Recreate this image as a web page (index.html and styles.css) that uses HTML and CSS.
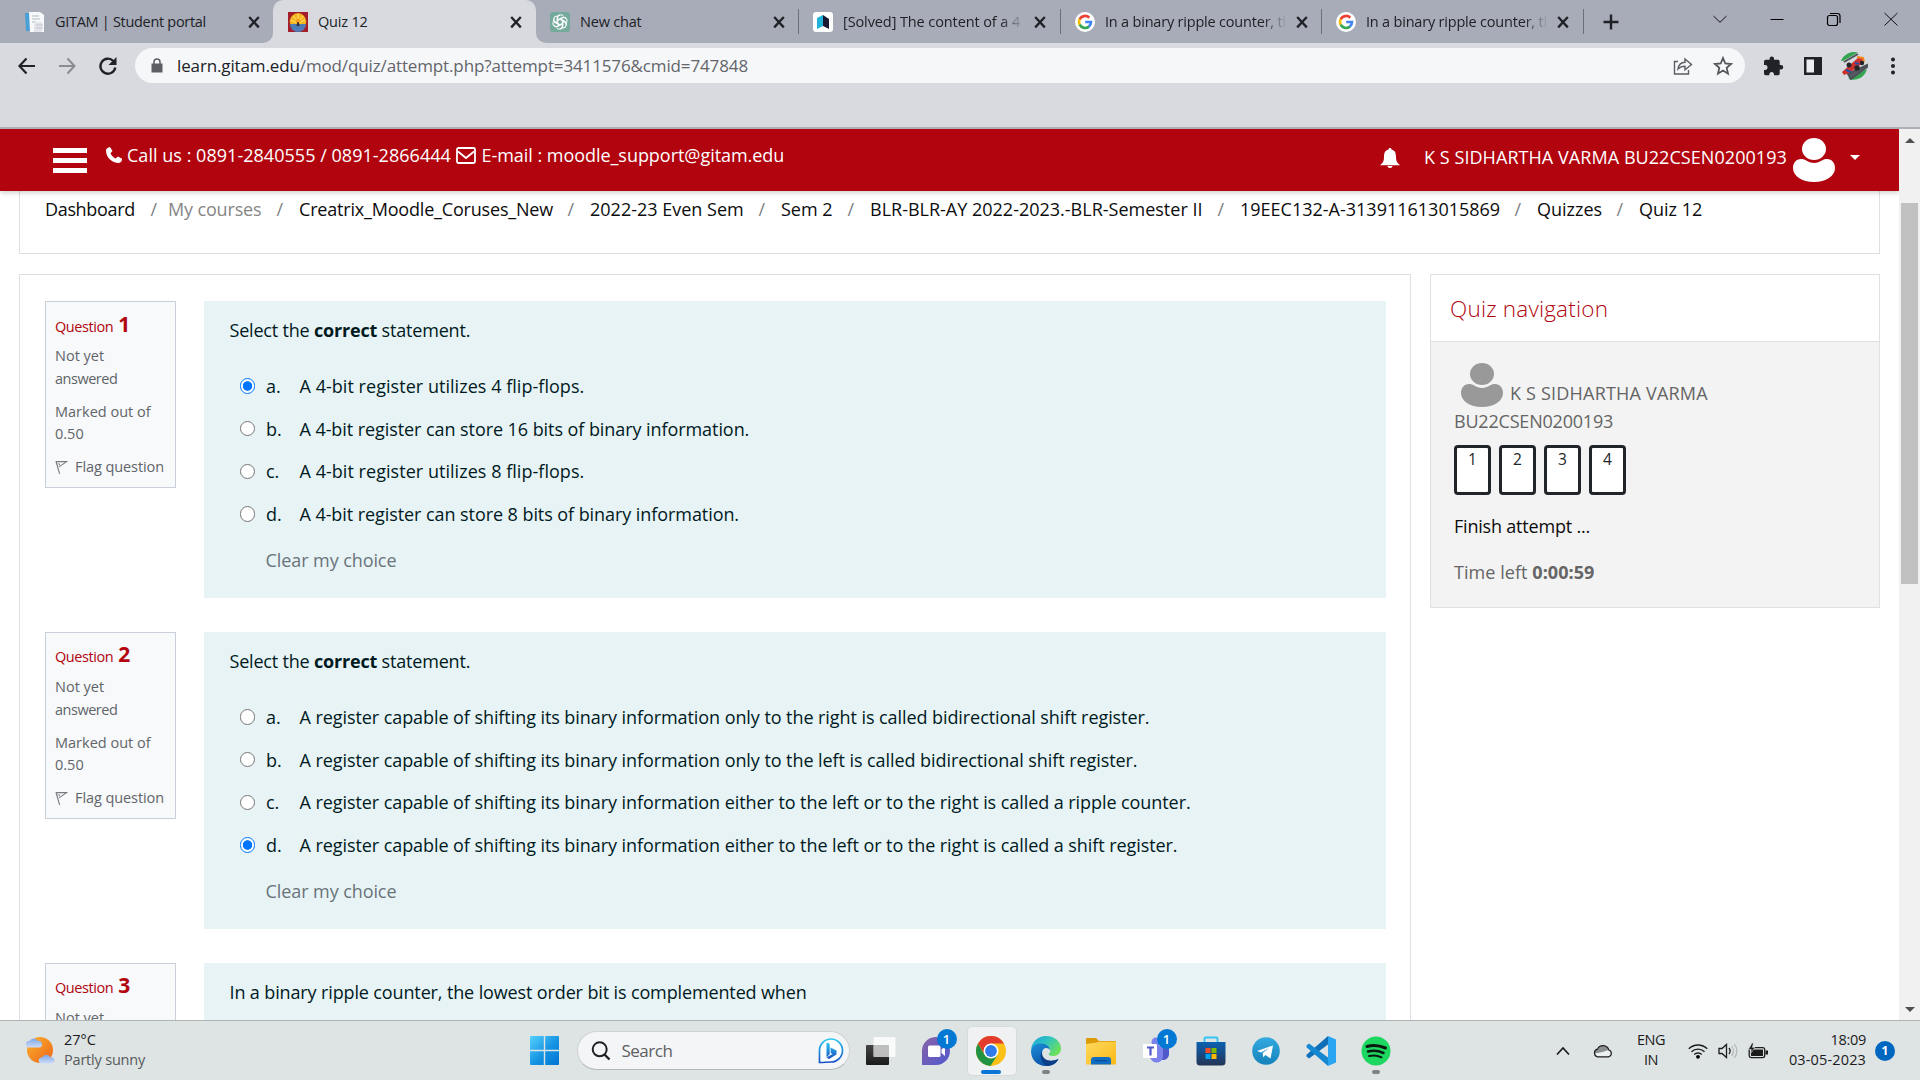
FILE: index.html
```
<!DOCTYPE html>
<html lang="en">
<head>
<meta charset="utf-8">
<title>Quiz 12</title>
<link rel="stylesheet" href="styles.css">
</head>
<body>
<svg class="defs" width="0" height="0">
  <symbol id="close" viewBox="0 0 20 20"><path d="M5.2 5l9.6 10.4M14.8 5L5.2 15.400" stroke="#202227" stroke-width="2.300" fill="none"/></symbol>
  <symbol id="google" viewBox="0 0 20 20">
    <circle cx="10" cy="10" r="10" fill="#fff"/>
    <g fill="none" stroke-width="2.700">
      <path d="M14.300 5.700A6 6 0 0 0 4.700 7.300" stroke="#ea4335"/>
      <path d="M4.700 7.200A6 6 0 0 0 4.700 12.800" stroke="#fbbc05"/>
      <path d="M4.700 12.700A6 6 0 0 0 13.900 14.600" stroke="#34a853"/>
      <path d="M13.700 14.700A6 6 0 0 0 16 10H10.200" stroke="#4285f4"/>
    </g>
  </symbol>
  <symbol id="person" viewBox="0 0 42 44"><ellipse cx="21" cy="11" rx="12" ry="11"/><path d="M8 21c2 0 4 .5 6 2q7 4 14 0c2-1.500 4-2 6-2 5 0 8 4 8 9 0 8-9 14-21 14S0 38 0 30c0-5 3-9 8-9z"/></symbol>
  <symbol id="flag" viewBox="0 0 14 15"><path d="M1 .8l4 13.500M1.200 1.200h11.300L4.300 6.800M1.200 1.500l1.300 3M4 2.800l1 2" stroke="#777c81" stroke-width="1.200" fill="none"/></symbol>
</svg>

<div class="tabs">
  <div class="tab first">
    <svg class="fav" viewBox="0 0 20 20"><path d="M0 1h5v18H1z" fill="#4a9fd4"/><path d="M4 0h11l4 3v17H5z" fill="#f7f8fa"/><path d="M7 4h7M7 7h8M7 10h4" stroke="#c9cdd6" stroke-width="1.500"/><path d="M9 10h8v10H9z" fill="#e3e5eb"/><path d="M11 13h7M11 16h7" stroke="#c0c5cf"/></svg>
    <span class="title t-gitam">GITAM | Student portal</span>
    <svg class="x"><use href="#close"/></svg>
  </div>
  <div class="tab-slot"><div class="tab active">
    <svg class="fav" viewBox="0 0 20 20"><path d="M0 0h20v20H0z" fill="#a31d2b"/><circle cx="10" cy="9.500" r="8.300" fill="#f6b51e"/><path d="M2 12h16a8 8 0 0 1-16 0z" fill="#4c7bb5"/><path d="M10 1v10M5 4l5 6 5-6M3 8l6 3h2l6-3" stroke="#fae36a" fill="none"/><circle cx="10" cy="9" r="2.200" fill="#fa9b1b"/><path d="M9.300 10h1.400l.8 4h-3z" fill="#3b2b2a"/></svg>
    <span class="title">Quiz 12</span>
    <svg class="x"><use href="#close"/></svg>
  </div></div>
  <div class="tab after">
    <svg class="fav" viewBox="0 0 20 20"><rect width="20" height="20" rx="3" fill="#74aa9c"/><g fill="none" stroke="#fff" stroke-width="1"><path id="petal" d="M7.700 11.300V6a3.200 3.200 0 0 1 5.900-1.700M7.700 7.900l4-2.300a3.200 3.200 0 0 1 4.300 1"/><use href="#petal" transform="rotate(60 10 10)"/><use href="#petal" transform="rotate(120 10 10)"/><use href="#petal" transform="rotate(180 10 10)"/><use href="#petal" transform="rotate(240 10 10)"/><use href="#petal" transform="rotate(300 10 10)"/></g></svg>
    <span class="title">New chat</span>
    <svg class="x"><use href="#close"/></svg>
  </div>
  <div class="tab plain">
    <svg class="fav" viewBox="0 0 20 20"><rect width="20" height="20" rx="3" fill="#fff"/><path d="M4 6l6-3v11l-6 3z" fill="#20b4d8"/><path d="M10 3l6 4v10l-6-3z" fill="#191a32"/></svg>
    <span class="title fade solved">[Solved] The content of a 4</span>
    <svg class="x"><use href="#close"/></svg>
  </div>
  <div class="tab plain narrow">
    <svg class="fav"><use href="#google"/></svg>
    <span class="title fade">In a binary ripple counter, the</span>
    <svg class="x"><use href="#close"/></svg>
  </div>
  <div class="tab plain">
    <svg class="fav"><use href="#google"/></svg>
    <span class="title fade">In a binary ripple counter, the</span>
    <svg class="x"><use href="#close"/></svg>
  </div>
  <div class="tab-end">
    <svg class="plus" viewBox="0 0 20 20"><path d="M10 2.500v15M2.500 10h15" stroke="#202227" stroke-width="2.400"/></svg>
    <div class="win">
      <svg viewBox="0 0 16 16"><path d="M1.500 5L8 11.300 14.500 5" fill="none" stroke="#111"/></svg>
      <svg viewBox="0 0 16 16"><path d="M1.500 8.500h13" stroke="#000"/></svg>
      <svg viewBox="0 0 16 16"><rect x="1.500" y="4.500" width="10" height="10" rx="2" fill="none" stroke="#000" stroke-width="1.200"/><path d="M4 2.500h7.500a2.500 2.500 0 0 1 2.500 2.500V12" fill="none" stroke="#000" stroke-width="1.200"/></svg>
      <svg viewBox="0 0 16 16"><path d="M1.500 2l13 12.500M14.500 2l-13 12.500" stroke="#111"/></svg>
    </div>
  </div>
</div>

<div class="toolbar">
  <svg class="tool back" viewBox="0 0 24 24"><path d="M20 12H5M11.500 4.500L4.500 12l7 7.500" fill="none" stroke="#202227" stroke-width="2.200"/></svg>
  <svg class="tool fwd" viewBox="0 0 24 24"><path d="M4 12h15M12.500 4.500l7 7.500-7 7.500" fill="none" stroke="#8b8c92" stroke-width="2"/></svg>
  <svg class="tool reload" viewBox="0 0 24 24"><path d="M19.300 13.500A7.500 7.500 0 1 1 17.300 7" fill="none" stroke="#202227" stroke-width="2.300"/><path d="M20.500 3v8h-8z" fill="#202227"/></svg>
  <div class="omnibox">
    <svg class="lock" viewBox="0 0 12 14"><path d="M.5 5h11v9H.5z" fill="#5c5e64"/><path d="M3 5.500V3.500a3 3 0 0 1 6 0v2" fill="none" stroke="#5c5e64" stroke-width="1.500"/></svg>
    <span class="url"><b>learn.gitam.edu</b>/mod/quiz/attempt.php?attempt=3411576&amp;cmid=747848</span>
    <svg class="share" viewBox="0 0 20 20"><path d="M5 5.500H1.500v12.500h14V14M5 13c.5-4 3-6.500 7-6.700V3l6.500 5.500L12 13.800v-3.500C9 10.300 7 11 5 13z" fill="none" stroke="#5c5e64" stroke-width="1.400"/></svg>
    <svg class="star" viewBox="0 0 20 20"><path d="M10 2l2.300 5.500 5.700.5-4.300 3.900 1.300 5.800-5-3.100-5 3.100 1.300-5.800L2 8l5.700-.5z" fill="none" stroke="#55575c" stroke-width="1.800"/></svg>
  </div>
  <svg class="tool puzzle" viewBox="0 0 24 24"><path d="M20 11h-1.300V7.500A1.700 1.700 0 0 0 17 5.800h-4V4.600a2.200 2.200 0 0 0-4.400 0v1.200H4.800A1.800 1.800 0 0 0 3 7.600v3.500h1.200a2.400 2.400 0 0 1 0 4.800H3v3.600a1.700 1.700 0 0 0 1.800 1.700h3.500V20a2.400 2.400 0 0 1 4.700 0v1.200h4a1.700 1.700 0 0 0 1.700-1.700v-4H20a2.200 2.200 0 0 0 0-4.500z" fill="#202227"/></svg>
  <svg class="tool panel" viewBox="0 0 24 24"><path d="M3 3h18v18H3z" fill="#202227"/><path d="M5.500 5.500h7.500v13H5.500z" fill="#eceef2"/></svg>
  <svg class="avatar" viewBox="0 0 28 28"><circle cx="14" cy="14" r="14" fill="#d8dade"/><path d="M1 9A14 14 0 0 1 18 .6L3 9zM27 17A14 14 0 0 1 8 26.700z" fill="#35a552"/><path d="M4 10L18 2M11 27l16-12v-2L8 22z" stroke="#4d5259" stroke-width="2" fill="#555a61"/><path d="M2 20l9-8 8-7 5 2-1 4-8 6-6 4-5 2z" fill="#cd302d"/><path d="M17 5l6 1 1 4" stroke="#f58a25" stroke-width="2" fill="none"/><path d="M6 18l5 2m4-9l4 1" stroke="#2153ad" stroke-width="2"/><circle cx="9" cy="13" r="2.500" fill="#23262b"/><circle cx="17" cy="16" r="2.700" fill="#23262b"/><circle cx="22" cy="11" r="2.200" fill="#23262b"/></svg>
  <svg class="tool dots" viewBox="0 0 24 24"><circle cx="12" cy="5.500" r="2"/><circle cx="12" cy="12" r="2"/><circle cx="12" cy="18.500" r="2"/></svg>
</div>

<div class="page">
  <div class="doc">
    <header class="site">
      <div class="burger"><i></i><i></i><i></i></div>
      <svg class="phone" viewBox="0 0 16 16"><path d="M1.500 1L4 0l2.500 4-2 2.300c1 2.400 2.700 4.100 5 5.100L12 9.500l4 2.300c.2 2-.9 3.400-3 4.200C5.500 15.800.2 10.500 0 3.500 0 2.300.6 1.500 1.500 1z" fill="#fff"/></svg>
      <span class="call">Call us : 0891-2840555 / 0891-2866444</span>
      <svg class="mail" viewBox="0 0 20 17"><rect x="1" y="1" width="18" height="15" rx="1.500" fill="none" stroke="#fff" stroke-width="1.800"/><path d="M2 4.500l8 6.500 8-6.500" fill="none" stroke="#fff" stroke-width="1.800"/></svg>
      <span class="email">E-mail : moodle_support@gitam.edu</span>
      <svg class="bell" viewBox="0 0 20 20"><path d="M10 0c1 0 1.500.6 1.500 1.500C15 2.300 16 5 16 9c0 4 1 6 4 8.300H0C3 15 4 13 4 9c0-4 1-6.700 4.500-7.500C8.500.6 9 0 10 0zM7.500 18h5c0 1.300-1 2-2.500 2s-2.500-.7-2.500-2z" fill="#fff"/></svg>
      <span class="user">K S SIDHARTHA VARMA BU22CSEN0200193</span>
      <svg class="face" fill="#fff"><use href="#person"/></svg>
      <i class="caret"></i>
    </header>

    <nav class="crumbs">
      <span><a class="tight">Dashboard</a><i>/</i></span>
      <span><a class="muted">My courses</a><i>/</i></span>
      <span><a class="snug">Creatrix_Moodle_Coruses_New</a><i>/</i></span>
      <span><a>2022-23 Even Sem</a><i>/</i></span>
      <span><a>Sem 2</a><i>/</i></span>
      <span><a>BLR-BLR-AY 2022-2023.-BLR-Semester II</a><i>/</i></span>
      <span><a>19EEC132-A-313911613015869</a><i>/</i></span>
      <span><a>Quizzes</a><i>/</i></span>
      <span><a>Quiz 12</a></span>
    </nav>

    <div class="cols">
      <main class="quiz">
        <section class="question">
          <div class="info">
            <h3>Question <b>1</b></h3>
            <p class="state">Not yet<br><span>answered</span></p>
            <p class="grade">Marked out of<br>0.50</p>
            <p class="flag"><svg><use href="#flag"/></svg>Flag question</p>
          </div>
          <div class="body short">
            <p class="stem">Select the <b>correct</b> statement.</p>
            <div class="answers">
              <label><i class="radio on"></i><em>a.</em><span>A 4-bit register utilizes 4 flip-flops.</span></label>
              <label><i class="radio"></i><em>b.</em><span>A 4-bit register can store 16 bits of binary information.</span></label>
              <label><i class="radio"></i><em>c.</em><span>A 4-bit register utilizes 8 flip-flops.</span></label>
              <label><i class="radio"></i><em>d.</em><span>A 4-bit register can store 8 bits of binary information.</span></label>
            </div>
            <p class="clear">Clear my choice</p>
          </div>
        </section>
        <section class="question">
          <div class="info">
            <h3>Question <b>2</b></h3>
            <p class="state">Not yet<br><span>answered</span></p>
            <p class="grade">Marked out of<br>0.50</p>
            <p class="flag"><svg><use href="#flag"/></svg>Flag question</p>
          </div>
          <div class="body long">
            <p class="stem">Select the <b>correct</b> statement.</p>
            <div class="answers">
              <label><i class="radio"></i><em>a.</em><span>A register capable of shifting its binary information only to the right is called bidirectional shift register.</span></label>
              <label><i class="radio"></i><em>b.</em><span>A register capable of shifting its binary information only to the left is called bidirectional shift register.</span></label>
              <label><i class="radio"></i><em>c.</em><span>A register capable of shifting its binary information either to the left or to the right is called a ripple counter.</span></label>
              <label><i class="radio on"></i><em>d.</em><span>A register capable of shifting its binary information either to the left or to the right is called a shift register.</span></label>
            </div>
            <p class="clear">Clear my choice</p>
          </div>
        </section>
        <section class="question">
          <div class="info">
            <h3>Question <b>3</b></h3>
            <p class="state">Not yet</p>
          </div>
          <div class="body">
            <p class="stem ripple">In a binary ripple counter, the lowest order bit is complemented when</p>
          </div>
        </section>
      </main>

      <aside class="nav">
        <h2>Quiz navigation</h2>
        <div class="nav-body">
          <div class="who"><svg fill="#999"><use href="#person"/></svg><span>K S SIDHARTHA VARMA</span></div>
          <p class="id">BU22CSEN0200193</p>
          <div class="nums"><a>1</a><a>2</a><a>3</a><a>4</a></div>
          <p class="finish">Finish attempt ...</p>
          <p class="left">Time left <b>0:00:59</b></p>
        </div>
      </aside>
    </div>
  </div>
  <div class="scroll"><i class="up"></i><div class="thumb"></div><i class="down"></i></div>
</div>

<footer class="taskbar">
  <div class="weather">
    <svg viewBox="0 0 30 30"><defs><linearGradient id="sun" x1="0" y1="0" x2="1" y2="1"><stop offset="0" stop-color="#f8b32c"/><stop offset="1" stop-color="#f0631a"/></linearGradient><linearGradient id="cl" x1="0" y1="0" x2="0" y2="1"><stop offset="0" stop-color="#7fa6e6"/><stop offset="1" stop-color="#cddcf9"/></linearGradient></defs><circle cx="15" cy="15" r="13" fill="url(#sun)"/><path d="M3 12.500a3.500 3.500 0 0 1 0-6.500h1.500a4.800 4.800 0 0 1 8.500 0 3.300 3.300 0 0 1 1.500 6.500z" fill="url(#cl)"/><path d="M15.500 28.500a3.300 3.300 0 0 1 0-6h1.500a4.700 4.700 0 0 1 8.500 0 3 3 0 0 1 1.500 6z" fill="url(#cl)"/></svg>
    <div><p>27°C</p><p class="sky">Partly sunny</p></div>
  </div>
  <svg class="start" viewBox="0 0 29 29"><defs><linearGradient id="win" x1="0" y1="0" x2="1" y2="1"><stop offset="0" stop-color="#55d1ff"/><stop offset=".55" stop-color="#1593e2"/><stop offset="1" stop-color="#0073d2"/></linearGradient></defs><path d="M0 1q0-1 1-1h12.800v13.800H0zM15.200 0H28q1 0 1 1v12.800H15.200zM0 15.200h13.800V29H1q-1 0-1-1zM15.200 15.200H29V28q0 1-1 1H15.200z" fill="url(#win)"/></svg>
  <div class="search">
    <svg class="lens" viewBox="0 0 20 20"><circle cx="8.700" cy="8.300" r="7" fill="none" stroke="#222" stroke-width="2"/><path d="M13.500 13.500l5 5" stroke="#222" stroke-width="2.400"/></svg>
    <span>Search</span>
    <svg class="bing" viewBox="0 0 26 26"><defs><linearGradient id="bg1" x1="0" y1="0" x2="0" y2="1"><stop offset="0" stop-color="#2bc7ee"/><stop offset="1" stop-color="#1850c8"/></linearGradient></defs><path d="M1.500 24.500v-12A11.500 11.500 0 1 1 13 24c-4 0-7 .5-11.500.5z" fill="#fff" stroke="url(#bg1)" stroke-width="1.700"/><path d="M8.500 4.500l3.200 1.200v10.500l-3.200 3zM12.500 9.500l6 3v4L11 21l-2.500-1.600 6-3.400-1.800-1z" fill="url(#bg1)"/></svg>
  </div>
  <div class="apps">
    <div class="app"><svg viewBox="0 0 30 30"><defs><linearGradient id="tv" x1="0" y1="0" x2="0" y2="1"><stop offset="0" stop-color="#444"/><stop offset="1" stop-color="#1b1b1b"/></linearGradient></defs><rect x="0" y="9" width="23" height="20" rx="1" fill="url(#tv)"/><rect x="7.500" y="1" width="22" height="20" rx="1" fill="#fff" opacity=".82"/><path d="M7.500 9H23v12H7.500z" fill="#aaa" opacity=".6"/></svg></div>
    <div class="app"><svg viewBox="0 0 30 30"><defs><linearGradient id="chat" x1="0" y1="0" x2="1" y2="1"><stop offset="0" stop-color="#8b62a5"/><stop offset="1" stop-color="#4e59cf"/></linearGradient></defs><path d="M1 29V16A14 14 0 1 1 15 29z" fill="url(#chat)"/><rect x="7" y="9.500" width="12.500" height="11.500" rx="1.500" fill="#fff"/><path d="M20.500 13.500l3.500-3v9.500l-3.500-3z" fill="#fff"/></svg><b class="badge">1</b></div>
    <div class="app on"><svg viewBox="0 0 30 30"><circle cx="15" cy="15" r="15" fill="#fbc116"/><path d="M2 7.500A15 15 0 0 0 14.500 30L21.500 18.800 15 15 8.500 18.700z" fill="#229342"/><path d="M2 7.500l6.500 10.800L15 7.500H28A15 15 0 0 0 2 7.500z" fill="#e33b2e"/><circle cx="15" cy="15" r="7.500" fill="#fff"/><circle cx="15" cy="15" r="5.900" fill="#2f7bea"/></svg><i class="run wide"></i></div>
    <div class="app"><svg viewBox="0 0 30 30"><defs><linearGradient id="e1" x1="0" y1="0" x2="1" y2=".6"><stop offset="0" stop-color="#1aa0dc"/><stop offset=".5" stop-color="#2fc3c2"/><stop offset="1" stop-color="#6de05a"/></linearGradient><linearGradient id="e2" x1="0" y1="0" x2=".6" y2="1"><stop offset="0" stop-color="#1c8fda"/><stop offset="1" stop-color="#0a4ea3"/></linearGradient></defs><path d="M0 13A15 15 0 0 1 15 0c9 0 15 6 15 12.500 0 5-4 7.500-8 7.500-4 0-5-1.500-3.500-3 1-1 1-2 .5-3.500C17 8 6 8 0 13z" fill="url(#e1)"/><path d="M0 15C.5 10 5 7.500 10 7.500c5 0 9 3 9 7-2-4-8-3-8 3 0 7 8 9.500 16.500 5.500C25 28 20.500 30 15 30 6 30 0 23.500 0 15z" fill="url(#e2)"/><path d="M11 15c-3 6 0 12 5 15 5-.2 9-2.500 11.500-7-7.500 3.500-16 1.500-16.500-5.500z" fill="#0c3f86"/></svg><i class="run"></i></div>
    <div class="app"><svg viewBox="0 0 30 30"><path d="M0 3q0-1 1-1h9l3 3h16q1 0 1 1v5H0z" fill="#dd9b0a"/><defs><linearGradient id="fo" x1="0" y1="0" x2="1" y2="1"><stop offset="0" stop-color="#ffd95f"/><stop offset="1" stop-color="#f9b916"/></linearGradient></defs><path d="M0 8l11-1.500 2-.8h17V28.500H0z" fill="url(#fo)"/><path d="M5 28.500V24q0-3 3-3h14q3 0 3 3v4.500z" fill="#0f6ec2"/><path d="M9 24.700h12" stroke="#0a4b92" stroke-width="1.200"/></svg></div>
    <div class="app"><svg viewBox="0 0 30 30"><circle cx="15" cy="6" r="4.500" fill="#7b83eb"/><path d="M21 10h7v9a6 6 0 0 1-7 5z" fill="#5059c9"/><path d="M9 10h13v9a6.500 6.500 0 0 1-13 2z" fill="#7b83eb"/><rect x="2" y="8" width="14" height="14" rx="1" fill="#fff"/><path d="M6 11.500h7M9.500 11.500v8" stroke="#5059c9" stroke-width="2.200"/></svg><b class="badge">1</b></div>
    <div class="app"><svg viewBox="0 0 30 30"><defs><linearGradient id="st" x1="0" y1="0" x2="0" y2="1"><stop offset="0" stop-color="#0b61b2"/><stop offset="1" stop-color="#243456"/></linearGradient></defs><path d="M8.500 7V2.500q0-1 1-1h11q1 0 1 1V7" fill="none" stroke="#32c3f5" stroke-width="1.800"/><path d="M.5 6h29v20q0 3.500-3.500 3.500H4Q.5 29.500.5 26z" fill="url(#st)"/><path d="M9.500 12h5v5h-5z" fill="#f25022"/><path d="M15.500 12h5v5h-5z" fill="#7fba00"/><path d="M9.500 18h5v5h-5z" fill="#00a4ef"/><path d="M15.500 18h5v5h-5z" fill="#ffb900"/></svg></div>
    <div class="app"><svg viewBox="0 0 30 30"><defs><linearGradient id="tg" x1="0" y1="0" x2="0" y2="1"><stop offset="0" stop-color="#33a9e0"/><stop offset="1" stop-color="#1683bb"/></linearGradient></defs><circle cx="15" cy="15" r="13.800" fill="url(#tg)"/><path d="M6 15l16-5.500-2.500 13-5-3.500-2.300 2.300-.5-4.300 6.500-5.200-8 4.700z" fill="#fff"/></svg></div>
    <div class="app"><svg viewBox="0 0 30 30"><path d="M22 0L5.500 15.500 2.500 18 .5 17v-2.500L22 8z" transform="translate(0 3)" fill="none"/><path d="M22 0v8.500L3 22.500.5 20.500v-1.800z" fill="#0f6fb8"/><path d="M22 30v-8.500L3 7.500.5 9.500v1.800z" fill="#1588d1"/><path d="M22 0l8 3.500v23L22 30z" fill="#2aa5f2"/></svg></div>
    <div class="app"><svg viewBox="0 0 30 30"><circle cx="15" cy="15" r="14.500" fill="#1ed760"/><g fill="none" stroke="#0b1a10" stroke-linecap="round"><path d="M6 10.500q9-2.500 18.500 1.500" stroke-width="3"/><path d="M7 15.500q8-2 15.500 1.500" stroke-width="2.500"/><path d="M8 20q7-1.500 12.500 1.300" stroke-width="2"/></g></svg><i class="run"></i></div>
  </div>
  <div class="tray">
    <svg class="chev" viewBox="0 0 14 10"><path d="M1 8.500l6-6.500 6 6.500" fill="none" stroke="#1c1c1c" stroke-width="1.700"/></svg>
    <svg class="cloud" viewBox="0 0 20 15"><path d="M4.500 13.800a3.900 3.900 0 0 1 0-7.600 6 6 0 0 1 11.300.8 3.500 3.500 0 0 1-.3 6.800z" fill="#eef1f1"/><path d="M1.500 10.500c0-2.500 1.500-4 3.500-4a5.500 5.500 0 0 1 10.500.5l-6 2z" fill="#8d9090"/><path d="M4.500 13.800a3.900 3.900 0 0 1 0-7.600 6 6 0 0 1 11.300.8 3.500 3.500 0 0 1-.3 6.800z" fill="none" stroke="#1c1c1c" stroke-width="1.200"/></svg>
    <div class="lang"><p>ENG</p><p>IN</p></div>
    <svg class="wifi" viewBox="0 0 20 16"><g fill="none" stroke="#1c1c1c" stroke-width="1.400"><path d="M.8 5.800a13 13 0 0 1 18.400 0M3.500 8.800a9.200 9.200 0 0 1 13 0M6.300 11.500a5.300 5.300 0 0 1 7.400 0"/></g><circle cx="10" cy="13.800" r="1.900"/></svg>
    <svg class="vol" viewBox="0 0 20 16"><path d="M1 5.500h3L8.500 1.500v13L4 10.500H1z" fill="none" stroke="#1c1c1c" stroke-width="1.300"/><path d="M11 5q2.300 3 0 6" fill="none" stroke="#1c1c1c" stroke-width="1.300"/><path d="M13.500 3q4 5 0 10M16.300 1.200q5.300 6.800 0 13.600" fill="none" stroke="#b3b7b8" stroke-width="1.200"/></svg>
    <svg class="batt" viewBox="0 0 20 16"><rect x="1.200" y="4.600" width="15.500" height="10" rx="2" fill="none" stroke="#1c1c1c" stroke-width="1.300"/><path d="M3 6.500h12V13H3zM17.500 7.500H20v4h-2.500z" fill="#1c1c1c"/><path d="M4 0L.5 6.500h2.800L2.500 10.500 7 4.500H4.300L5.500 0z" fill="#1c1c1c" stroke="#dfe3e4" stroke-width=".6"/></svg>
    <div class="clock"><p class="time">18:09</p><p class="date">03-05-2023</p></div>
    <b class="notes">1</b>
  </div>
</footer>
</body>
</html>
```
FILE: styles.css
```
* { box-sizing: border-box; }
body {
  margin: 0;
  width: 1920px;
  height: 1080px;
  overflow: hidden;
  display: flex;
  flex-direction: column;
  background: #fff;
  font-family: "Open Sans", "Noto Sans", sans-serif;
  font-size: 18px;
}
p, h2, h3 { margin: 0; font-weight: 400; }
i, em { font-style: normal; }
svg { display: block; flex: none; }
.defs { position: absolute; }

/* tab strip */
.tabs { display: flex; height: 43px; flex: none; background: #d9dadf; }
.tab { display: flex; align-items: center; height: 43px; background: #a8acb8; padding: 0 11px 0 14px; width: 262px; }
.tab.narrow { width: 261px; padding-right: 10px; }
.tab.first { width: 273px; padding: 0 9px 0 25px; border-radius: 0 0 10px 0; }
.tab-slot { width: 263px; background: linear-gradient(#a8acb8 50%, #d9dadf 50%); }
.tab.active { width: 263px; background: #d9dadf; border-radius: 10px 10px 0 0; padding-left: 15px; padding-right: 10px; }
.tab.after { width: 263px; border-radius: 0 0 0 10px; padding-right: 10px; }
.tab.after, .tab.plain { background-image: linear-gradient(#6c6f79, #6c6f79); background-repeat: no-repeat; background-position: right 9px; background-size: 1px 25px; }
.fav { width: 20px; height: 20px; }
.x { width: 20px; height: 20px; margin-left: auto; }
.title { font-size: 14.5px; line-height: 42px; letter-spacing: -.2px; margin-left: 10px; width: 180px; white-space: nowrap; overflow: hidden; color: #202227; }
.t-gitam { letter-spacing: -.3px; }
.solved { letter-spacing: -.1px; }
.fade { -webkit-mask-image: linear-gradient(90deg, #000 158px, transparent 182px); mask-image: linear-gradient(90deg, #000 158px, transparent 182px); }
.tab-end { flex: 1; display: flex; align-items: center; background: #a8acb8; }
.plus { width: 20px; height: 20px; margin-left: 17px; }
.win { display: flex; gap: 41px; margin: -6px 21px 0 auto; }
.win svg { width: 16px; height: 16px; }

/* address row */
.toolbar { display: flex; align-items: center; height: 86px; flex: none; padding: 5px 0 44px 15px; background: #d9dadf; border-bottom: 2px solid #adb0b6; }
.tool { width: 24px; height: 24px; }
.fwd { margin-left: 16px; }
.reload { margin: 0 15px 0 17px; }
.omnibox { display: flex; align-items: center; width: 1610px; height: 35px; border-radius: 18px; background: #f6f7f9; padding: 0 12px 0 16px; }
.lock { width: 12px; height: 15px; }
.url { font-size: 17px; letter-spacing: -.13px; margin-left: 14px; color: #63656b; }
.url b { font-weight: 400; color: #202227; }
.share { width: 20px; height: 20px; margin-left: auto; }
.star { width: 20px; height: 20px; margin-left: 20px; }
.puzzle, .panel { margin-left: 16px; }
.avatar { width: 28px; height: 28px; margin-left: 15px; }
.dots { margin-left: 13px; fill: #202227; }

/* document */
.page { display: flex; height: 891px; flex: none; }
.doc { width: 1899px; overflow: hidden; }
.site { position: relative; display: flex; align-items: flex-start; height: 62px; background: #b1040e; color: #fff; box-shadow: 0 2px 5px rgba(0, 0, 0, .18); padding-left: 53px; line-height: 28px; white-space: nowrap; }
.burger { display: grid; gap: 5px; width: 34px; margin-top: 19px; }
.burger i { height: 5px; background: #fff; }
.phone { width: 16px; height: 16px; margin: 18px 5px 0 19px; }
.call { width: 329px; margin-top: 12px; letter-spacing: .03px; }
.mail { width: 20px; height: 17px; margin: 18px 5.500px 0 0; }
.email { margin-top: 12px; letter-spacing: -.04px; width: 898.500px; }
.bell { width: 20px; height: 20px; margin-top: 19px; }
.user { width: 369px; margin: 14px 0 0 24px; letter-spacing: .06px; }
.face { width: 42px; height: 44px; margin-top: 9px; }
.caret { margin: 26px 0 0 15px; border: 5px solid transparent; border-top-color: #fff; border-bottom: 0; }

.crumbs { display: grid; grid-template-columns: 123px 131px 291px 191px 89px 370px 297px 102px auto; height: 63px; margin: 0 19px; padding: 6px 0 0 25px; border: 1px solid #dedfe1; border-top: 0; line-height: 24px; white-space: nowrap; color: #0c0c0d; }
.crumbs span { display: flex; justify-content: space-between; }
.crumbs i { margin-right: 16px; color: #7d8287; }
.crumbs span:first-child i { margin-right: 11px; }
.tight { letter-spacing: -.34px; }
.snug { letter-spacing: -.19px; }
.muted { color: #868686; letter-spacing: -.15px; }

.cols { display: flex; gap: 19px; margin: 20px 0 0 19px; }
.quiz { width: 1392px; height: 900px; padding: 26px 24px 0 25px; border: 1px solid #dedfe1; }
.question { display: flex; gap: 28px; height: 297px; margin-bottom: 34px; }
.info { width: 131px; height: 187px; padding: 7px 0 0 9px; border: 1px solid #cad0d9; background: #f8f9fb; font-size: 14.5px; line-height: 22.5px; color: #616569; white-space: nowrap; }
.info h3 { font-size: 14.5px; line-height: 30px; height: 30px; color: #b1040e; letter-spacing: -.42px; }
.info h3 b { font-size: 21px; margin-left: 1.500px; }
.question + .question h3 { margin-top: -1px; height: 31px; }
.state { margin-top: 6.400px; }
.state span { letter-spacing: -.48px; }
.grade { margin-top: 10.500px; }
.flag { display: flex; align-items: center; gap: 7px; margin-top: 10.500px; letter-spacing: -.08px; }
.flag svg { width: 13px; height: 15px; }
.body { width: 1182px; padding: 15px 0 0 25.500px; background: #e7f3f5; color: #001a1e; white-space: nowrap; }
.stem { line-height: 28px; letter-spacing: -.19px; }
.ripple { letter-spacing: -.13px; }
.answers { padding: 20.700px 0 0 10px; }
.answers label { display: flex; align-items: center; height: 42.670px; }
.answers em { width: 33.500px; margin-left: 11px; }
.long label span { letter-spacing: -.072px; }
.short label:nth-child(odd) span { letter-spacing: .04px; }
.short label:nth-child(even) span { letter-spacing: -.07px; }
.radio { width: 15.500px; height: 15.500px; border: 1.500px solid #767676; border-radius: 50%; background: #fff; }
.radio.on { border: 1.500px solid #0075ff; background: radial-gradient(circle, #0075ff 4.400px, #fff 5.100px); }
.clear { margin: 10.600px 0 0 36px; line-height: 28px; color: #6a737b; letter-spacing: -.08px; }

.nav { width: 450px; height: 334px; border: 1px solid #dfe0e2; background: #f3f3f3; color: #656565; }
.nav h2 { height: 67px; padding-left: 19px; line-height: 68px; font-size: 22.500px; letter-spacing: .2px; font-weight: 300; color: #b1040e; background: #fff; border-bottom: 1px solid #dfe0e2; }
.nav-body { padding: 21px 0 0 23px; line-height: 28px; }
.who { display: flex; align-items: flex-end; gap: 7px; margin-left: 7px; letter-spacing: .2px; height: 44px; }
.who svg { width: 42px; height: 44px; }
.id { letter-spacing: -.2px; }
.nums { display: flex; gap: 8px; margin-top: 10px; }
.nums a { width: 37px; height: 50px; border: 3px solid #212529; border-radius: 4px; background: #fff; text-align: center; font-size: 15.500px; line-height: 22px; color: #212529; }
.finish { margin-top: 17px; color: #0c0c0d; letter-spacing: -.2px; }
.left { margin-top: 18px; letter-spacing: .06px; }

.scroll { width: 21px; display: flex; flex-direction: column; align-items: center; background: #f1f1f1; padding: 9px 0 8px; }
.up { border: 5px solid transparent; border-bottom-color: #505050; border-top: 0; }
.thumb { width: 17px; height: 381px; margin-top: 60px; background: #c1c1c1; }
.down { margin-top: auto; border: 5px solid transparent; border-top-color: #505050; border-bottom: 0; }

/* taskbar */
.taskbar { display: flex; align-items: center; height: 60px; flex: none; border-top: 1px solid #b0b5b6; background: #dee3e4; font-size: 14.500px; line-height: 20px; color: #1c1c1c; white-space: nowrap; }
.weather { display: flex; align-items: center; gap: 9px; width: 505px; margin: -2px 0 0 25px; }
.weather svg { width: 30px; height: 30px; }
.sky { color: #565a5b; letter-spacing: -.2px; }
.start { width: 29px; height: 29px; }
.search { display: flex; align-items: center; width: 273px; height: 39px; margin-left: 18px; padding: 0 5px 0 12.500px; border: 1px solid #cfd3d4; border-bottom-color: #b3b7b8; border-radius: 20px; background: #f4f5f7; font-size: 17px; letter-spacing: -.5px; color: #5d5f61; }
.lens { width: 20px; height: 20px; margin-right: 11px; }
.bing { width: 26px; height: 26px; margin-left: auto; }
.apps { display: flex; margin-left: 3.500px; }
.app { position: relative; display: flex; align-items: center; justify-content: center; width: 55px; height: 59px; }
.app svg { width: 30px; height: 30px; }
.app.on::before { content: ""; position: absolute; left: 3px; top: 5px; width: 48px; height: 48px; border: 1px solid #d6dadb; border-radius: 5px; background: #eff1f2; }
.app.on svg { position: relative; }
.run { position: absolute; left: 23px; top: 49px; width: 8px; height: 4px; border-radius: 2px; background: #808385; }
.run.wide { left: 17px; width: 20px; background: #0a75d6; }
.badge { position: absolute; left: 28px; top: 8px; width: 20px; height: 20px; border-radius: 50%; background: #0078d4; color: #fff; text-align: center; font-size: 13px; line-height: 20px; font-weight: 600; }
.tray { display: flex; align-items: center; margin-left: 152.500px; }
.chev { width: 14px; height: 10px; }
.cloud { width: 20px; height: 15px; margin-left: 23px; }
.lang { width: 34px; margin: -1px 0 0 21px; text-align: center; letter-spacing: -.5px; }
.wifi { width: 20px; height: 16px; margin-left: 20px; }
.vol { width: 20px; height: 16px; margin-left: 10px; }
.batt { width: 20px; height: 16px; margin-left: 10px; }
.clock { width: 98px; margin-top: -2px; text-align: right; }
.time { letter-spacing: -.3px; }
.date { letter-spacing: .14px; }
.notes { width: 20px; height: 20px; margin-left: 9px; border-radius: 50%; background: #0067c0; color: #fff; text-align: center; font-size: 12px; line-height: 20px; }
```
